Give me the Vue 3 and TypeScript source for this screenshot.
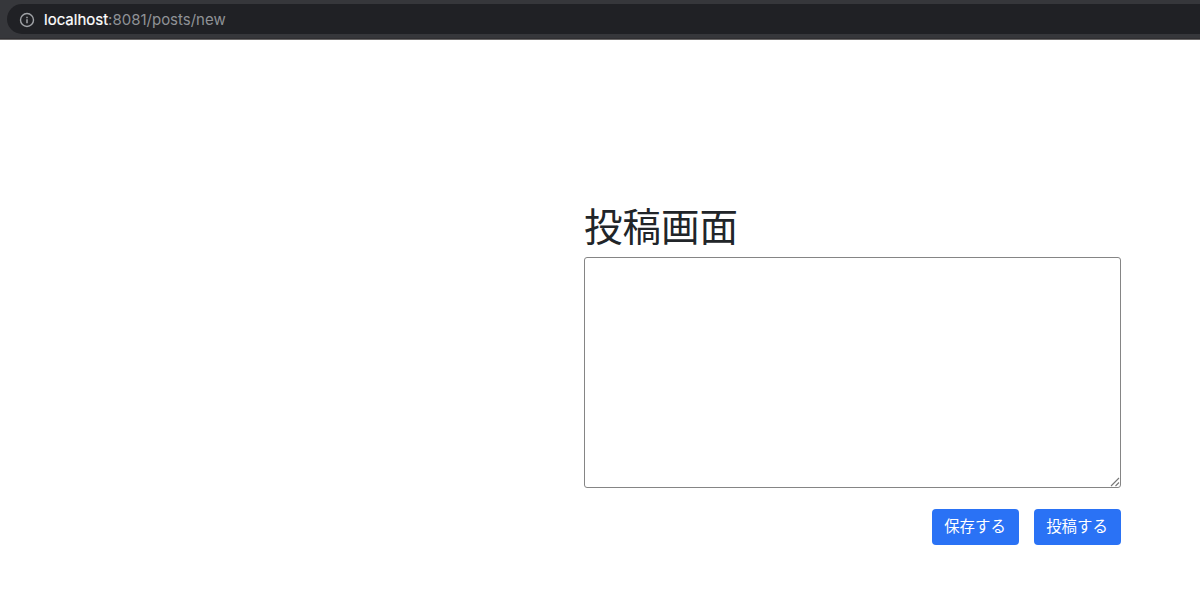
<script setup lang="ts">
import { ref } from 'vue'

const host = 'localhost'
const path = ':8081/posts/new'
const content = ref('')
const actions: string[] = ['保存する', '投稿する']
</script>

<template>
  <div class="window">
    <header class="toolbar">
      <div class="address">
        <svg class="info" viewBox="0 0 16 16" width="16" height="16" aria-hidden="true">
          <circle cx="8" cy="8" r="6.5" fill="none" stroke="#a0a3a7" stroke-width="1.4" />
          <path d="M8 7.2V11.3M8 4.7V6.2" fill="none" stroke="#a0a3a7" stroke-width="1.5" />
        </svg>
        <span class="url"><span class="host">{{ host }}</span>{{ path }}</span>
      </div>
    </header>
    <main class="page">
      <section class="editor">
        <h1>投稿画面</h1>
        <div class="field">
          <textarea v-model="content"></textarea>
          <svg class="grip" viewBox="0 0 10 10" width="10" height="10" aria-hidden="true">
            <path d="M1 9L9 1M5.5 9L9 5.5" fill="none" stroke="#777" stroke-width="1.1" />
          </svg>
        </div>
        <div class="actions">
          <button v-for="label in actions" :key="label" type="button">{{ label }}</button>
        </div>
      </section>
    </main>
  </div>
</template>

<style>
body {
  margin: 0;
  background: #fff;
}
</style>

<style scoped>
.window {
  height: 598px;
  overflow: hidden;
  background: #fff;
  font-family: "Liberation Sans", "Noto Sans CJK JP", sans-serif;
}
.toolbar {
  box-sizing: border-box;
  height: 40px;
  padding: 4px 0 0 7px;
  background: #36373b;
  border-bottom: 1px solid #6a6868;
  box-shadow: inset 0 -1px #302f32;
}
.address {
  display: flex;
  align-items: center;
  box-sizing: border-box;
  height: 30px;
  padding-left: 12px;
  background: #202125;
  border-radius: 15px 0 0 15px;
}
.info {
  flex: none;
  margin-top: 1px;
}
.url {
  margin: 2px 0 0 9px;
  color: #8f9296;
  font-family: Inter, sans-serif;
  font-size: 15px;
  line-height: 20px;
  white-space: nowrap;
}
.host {
  color: #fff;
  -webkit-text-stroke: 0.2px #fff;
}
.page {
  display: flex;
  justify-content: flex-end;
  padding: 161px 79px 0 0;
}
.editor {
  width: 537px;
}
h1 {
  margin: 0 0 10px;
  color: #212529;
  font-family: "Noto Sans CJK JP", sans-serif;
  font-size: 38.5px;
  font-weight: 400;
  line-height: 46px;
}
.field {
  position: relative;
  height: 231px;
}
textarea {
  display: block;
  box-sizing: border-box;
  width: 537px;
  height: 231px;
  margin: 0;
  padding: 2px;
  border: 1px solid #858585;
  border-radius: 3px;
  background: #fff;
  font-size: 16px;
  outline: none;
  resize: none;
}
.grip {
  position: absolute;
  right: 1px;
  bottom: 1px;
}
.actions {
  display: flex;
  justify-content: flex-end;
  gap: 15px;
  margin-top: 21px;
}
button {
  width: 87px;
  height: 36.4px;
  padding: 0 1px 3px 0;
  border: 0;
  border-radius: 4px;
  background: #2a72f5;
  color: #fff;
  font-family: "Noto Sans CJK JP", sans-serif;
  font-size: 15.4px;
  line-height: 33px;
}
</style>
